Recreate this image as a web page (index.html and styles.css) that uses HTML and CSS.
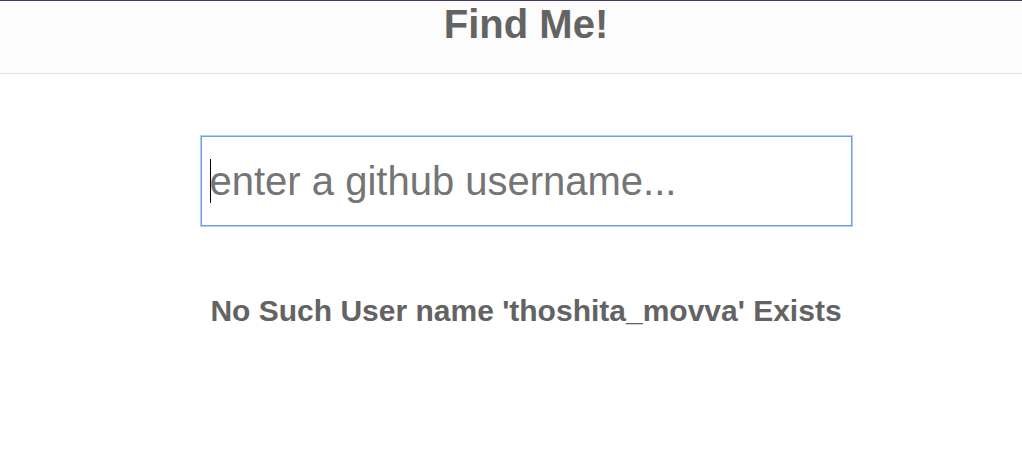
FILE: index.html
```html
<!DOCTYPE html>
<html>
<head>
<meta charset="utf-8">
<link rel="stylesheet" href="styles.css">
</head>
<body>
<header class="topbar">
  <h1 class="title">Find Me!</h1>
</header>
<main class="content">
  <div class="search">
    <input class="search-input" type="text" placeholder="enter a github username...">
    <span class="caret"></span>
  </div>
  <p class="message">No Such User name 'thoshita_movva' Exists</p>
</main>
</body>
</html>
```
FILE: styles.css
```css
html, body {
  margin: 0;
  padding: 0;
  background: #ffffff;
  font-family: "Liberation Sans", Arial, sans-serif;
  color: #666666;
}
.topbar {
  border-top: 1px solid #463a66;
  border-bottom: 1px solid #e2e2e2;
  background: #fcfcfc;
  height: 72px;
  box-sizing: content-box;
  padding-left: 30px;
}
.title {
  margin: 0;
  text-align: center;
  font-size: 40px;
  font-weight: bold;
  line-height: 46px;
  color: #636363;
}
.content {
  padding-left: 30px;
  padding-top: 62px;
  display: flex;
  flex-direction: column;
  align-items: center;
}
.search {
  position: relative;
  width: 651px;
}
.search-input {
  display: block;
  width: 651px;
  height: 90px;
  box-sizing: border-box;
  border: 1px solid #6d9ce8;
  border-radius: 0;
  box-shadow: 0 0 0 1px #b4cdf4;
  outline: none;
  padding: 0 8px;
  font-family: "Liberation Sans", Arial, sans-serif;
  font-size: 40px;
  color: #333;
  background: #fff;
}
.search-input::placeholder {
  color: #757575;
}
.caret {
  position: absolute;
  left: 9px;
  top: 23px;
  width: 1px;
  height: 44px;
  background: #000;
}
.message {
  margin: 68px 0 0 0;
  font-size: 30px;
  font-weight: bold;
  line-height: 34px;
  color: #636363;
  text-align: center;
}
```
